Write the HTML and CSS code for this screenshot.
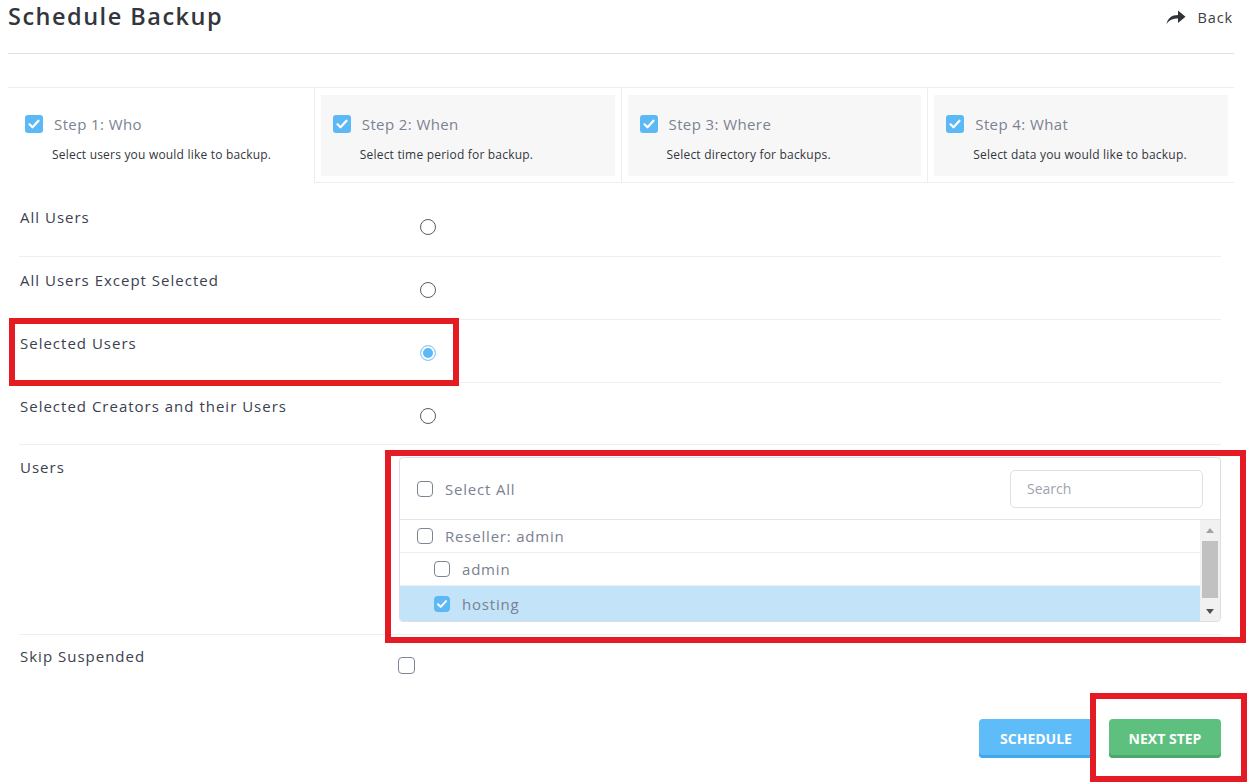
FILE: index.html
```html
<!DOCTYPE html>
<html lang="en">
<head>
  <meta charset="UTF-8">
  <title>Schedule Backup</title>
  <link rel="stylesheet" href="styles.css">
</head>
<body>
  <div class="page-header">
    <h1>Schedule Backup</h1>
    <a class="back-link" href="#">
      <svg width="20" height="15" viewBox="0 0 20 15"><path d="M0.5 14.5 C1.5 8 6 5 12 5 V0.5 L19.5 6.8 L12 13 V8.6 C7 8.6 3 10 0.5 14.5 Z" fill="#2f3238"/></svg>
      Back
    </a>
  </div>

  <!-- Wizard steps -->
  <div class="steps">
    <div class="step active">
      <div class="step-inner">
        <div class="step-title"><span class="check on"></span>Step 1: Who</div>
        <p class="step-desc">Select users you would like to backup.</p>
      </div>
    </div>
    <div class="step">
      <div class="step-inner">
        <div class="step-title"><span class="check on"></span>Step 2: When</div>
        <p class="step-desc">Select time period for backup.</p>
      </div>
    </div>
    <div class="step">
      <div class="step-inner">
        <div class="step-title"><span class="check on"></span>Step 3: Where</div>
        <p class="step-desc">Select directory for backups.</p>
      </div>
    </div>
    <div class="step">
      <div class="step-inner">
        <div class="step-title"><span class="check on"></span>Step 4: What</div>
        <p class="step-desc">Select data you would like to backup.</p>
      </div>
    </div>
  </div>

  <div class="form">
    <div class="form-row">
      <div class="form-label">All Users</div>
      <span class="radio"></span>
    </div>
    <div class="form-row">
      <div class="form-label">All Users Except Selected</div>
      <span class="radio"></span>
    </div>
    <div class="form-row">
      <div class="form-label">Selected Users</div>
      <span class="radio selected"></span>
    </div>
    <div class="form-row short">
      <div class="form-label">Selected Creators and their Users</div>
      <span class="radio"></span>
    </div>

    <div class="form-row users-row">
      <div class="form-label">Users</div>
      <div class="user-box">
        <div class="user-box-head">
          <span class="box"></span>
          <span class="item-text">Select All</span>
          <input class="search" type="text" placeholder="Search">
        </div>
        <div class="user-list">
          <div class="user-items">
            <div class="user-item"><span class="box"></span><span class="item-text">Reseller: admin</span></div>
            <div class="user-item child"><span class="box"></span><span class="item-text">admin</span></div>
            <div class="user-item child picked"><span class="box on"></span><span class="item-text">hosting</span></div>
          </div>
          <div class="scrollbar">
            <span class="arrow up"></span>
            <span class="thumb"></span>
            <span class="arrow down"></span>
          </div>
        </div>
      </div>
    </div>

    <div class="form-row last">
      <div class="form-label">Skip Suspended</div>
      <span class="box skip"></span>
    </div>

    <div class="actions">
      <button type="button" class="btn btn-blue">SCHEDULE</button>
      <button type="button" class="btn btn-green">NEXT STEP</button>
    </div>
  </div>

  <!-- highlight frames -->
  <div class="mark mark-radio"></div>
  <div class="mark mark-users"></div>
  <div class="mark mark-next"></div>
</body>
</html>
```

FILE: styles.css
```css
/* Base */
body {
  margin: 0;
  font-family: 'Open Sans', sans-serif;
  color: #3b4150;
  background: #FFFFFF;
}

.page-header {
  display: flex;
  justify-content: space-between;
  align-items: flex-start;
  height: 53px;
  margin: 0 24px 0 8px;
  border-bottom: 1px solid #dfe2e8;
}

.page-header h1 {
  margin: 0;
  padding-top: 1px;
  font-size: 23.5px;
  line-height: 30px;
  font-weight: 600;
  color: #33363c;
  letter-spacing: 1.5px;
}

.back-link {
  display: flex;
  align-items: center;
  gap: 11px;
  margin-top: 8px;
  margin-right: 1px;
  font-size: 14.5px;
  color: #3a3d44;
  text-decoration: none;
  letter-spacing: 0.9px;
}

/* Steps */
.steps {
  display: flex;
  margin: 33px 24px 0 8px;
  border-top: 1px solid #eceef1;
}

.step {
  flex: 1;
  padding: 7px 6px 6px;
  border-left: 1px solid #eceef1;
  border-bottom: 1px solid #eceef1;
}

.step.active {
  border-left: none;
  border-bottom-color: transparent;
}

.step-inner {
  background: #f7f7f8;
  padding: 20px 12px 13px;
}

.step.active .step-inner {
  background: transparent;
  padding-left: 11px;
}

.step-title {
  display: flex;
  align-items: center;
  gap: 11px;
  height: 18px;
  font-size: 15px;
  color: #7b8292;
  letter-spacing: 0.4px;
}

.step-desc {
  margin: 14px 0 0 27px;
  font-size: 12px;
  line-height: 16px;
  color: #33363c;
  letter-spacing: 0.2px;
}

.check {
  width: 18px;
  height: 18px;
  border-radius: 3px;
  flex-shrink: 0;
}

.check.on,
.box.on {
  background: #5db9f6 url("data:image/svg+xml,%3Csvg xmlns='http://www.w3.org/2000/svg' viewBox='0 0 18 18'%3E%3Cpath d='M4.5 9.3l3 3 6-6.6' fill='none' stroke='%23fff' stroke-width='2.2' stroke-linecap='round' stroke-linejoin='round'/%3E%3C/svg%3E") center / 100% no-repeat;
}

/* Form rows */
.form {
  margin: 11px 37px 0 19px;
}

.form-row {
  display: flex;
  align-items: flex-start;
  height: 63px;
  box-sizing: border-box;
  padding-top: 13px;
  border-bottom: 1px solid #eceef1;
}

.form-row.short {
  height: 62px;
}

.form-label {
  width: 378px;
  flex-shrink: 0;
  padding-left: 1px;
  font-size: 15px;
  line-height: 20px;
  letter-spacing: 1px;
  color: #3b4150;
}

.radio {
  width: 16px;
  height: 16px;
  box-sizing: border-box;
  margin: 12px 0 0 22px;
  border: 1.5px solid #5a5d63;
  border-radius: 50%;
}

.radio.selected {
  border: 1px solid #8ccdf7;
  background: #5db9f6;
  box-shadow: inset 0 0 0 2px #FFFFFF;
}

.box {
  width: 16px;
  height: 16px;
  box-sizing: border-box;
  border: 1.5px solid #7d8594;
  border-radius: 4px;
  flex-shrink: 0;
  background: #FFFFFF;
}

.box.on {
  border: none;
  background-color: #5db9f6;
}

/* Users picker */
.users-row {
  height: auto;
  padding-top: 12px;
  padding-bottom: 12px;
}

.user-box {
  flex: 1;
  margin-left: 1px;
  border: 1px solid #dcdee2;
  border-radius: 4px;
  overflow: hidden;
}

.user-box-head {
  display: flex;
  align-items: center;
  height: 61px;
  padding: 0 17px;
  border-bottom: 1px solid #e3e5e9;
}

.item-text {
  margin-left: 12px;
  font-size: 15px;
  color: #7a8191;
  letter-spacing: 0.8px;
}

.search {
  margin-left: auto;
  width: 193px;
  height: 38px;
  box-sizing: border-box;
  padding: 0 16px;
  border: 1px solid #dcdfe4;
  border-radius: 5px;
  font-family: 'Open Sans', sans-serif;
  font-size: 14px;
  color: #3b4150;
}

.search::placeholder {
  color: #9ea4ae;
}

.user-list {
  display: flex;
  height: 101px;
}

.user-items {
  flex: 1;
}

.user-item {
  display: flex;
  align-items: center;
  height: 33px;
  box-sizing: border-box;
  padding-left: 17px;
  border-bottom: 1px solid #eceef1;
}

.user-item.child {
  padding-left: 34px;
}

.user-item.picked {
  height: 35px;
  border-bottom: none;
  background: #c2e3f8;
}

.scrollbar {
  width: 20px;
  background: #f1f1f1;
  position: relative;
}

.scrollbar .thumb {
  position: absolute;
  left: 2px;
  right: 2px;
  top: 21px;
  height: 57px;
  background: #c1c1c1;
}

.scrollbar .arrow {
  position: absolute;
  left: 6px;
  width: 0;
  height: 0;
  border-left: 4px solid transparent;
  border-right: 4px solid transparent;
}

.scrollbar .arrow.up {
  top: 8px;
  border-bottom: 5px solid #a3a3a3;
}

.scrollbar .arrow.down {
  bottom: 7px;
  border-top: 5px solid #505050;
}

.form-row.last {
  border-bottom: none;
  padding-top: 11px;
}

.box.skip {
  width: 17px;
  height: 17px;
  margin-top: 11px;
}

/* Buttons */
.actions {
  display: flex;
  justify-content: flex-end;
  gap: 16px;
  margin-top: 21px;
}

.btn {
  height: 39px;
  border: none;
  border-radius: 4px;
  font-family: 'Open Sans', sans-serif;
  font-size: 14px;
  font-weight: 700;
  color: #FFFFFF;
  cursor: pointer;
}

.btn-blue {
  width: 114px;
  background: #5ebcf8;
  box-shadow: inset 0 -3px 0 #40a9ee;
}

.btn-green {
  width: 112px;
  background: #5ec07f;
  box-shadow: inset 0 -3px 0 #4aa96b;
}

/* Red highlight frames drawn over the form */
.mark {
  position: absolute;
  border: 6px solid #e41b22;
  box-sizing: border-box;
}

.mark-radio {
  left: 9px;
  top: 318px;
  width: 450px;
  height: 68px;
}

.mark-users {
  left: 385px;
  top: 450px;
  width: 861px;
  height: 193px;
}

.mark-next {
  left: 1090px;
  top: 693px;
  width: 157px;
  height: 89px;
}
```
